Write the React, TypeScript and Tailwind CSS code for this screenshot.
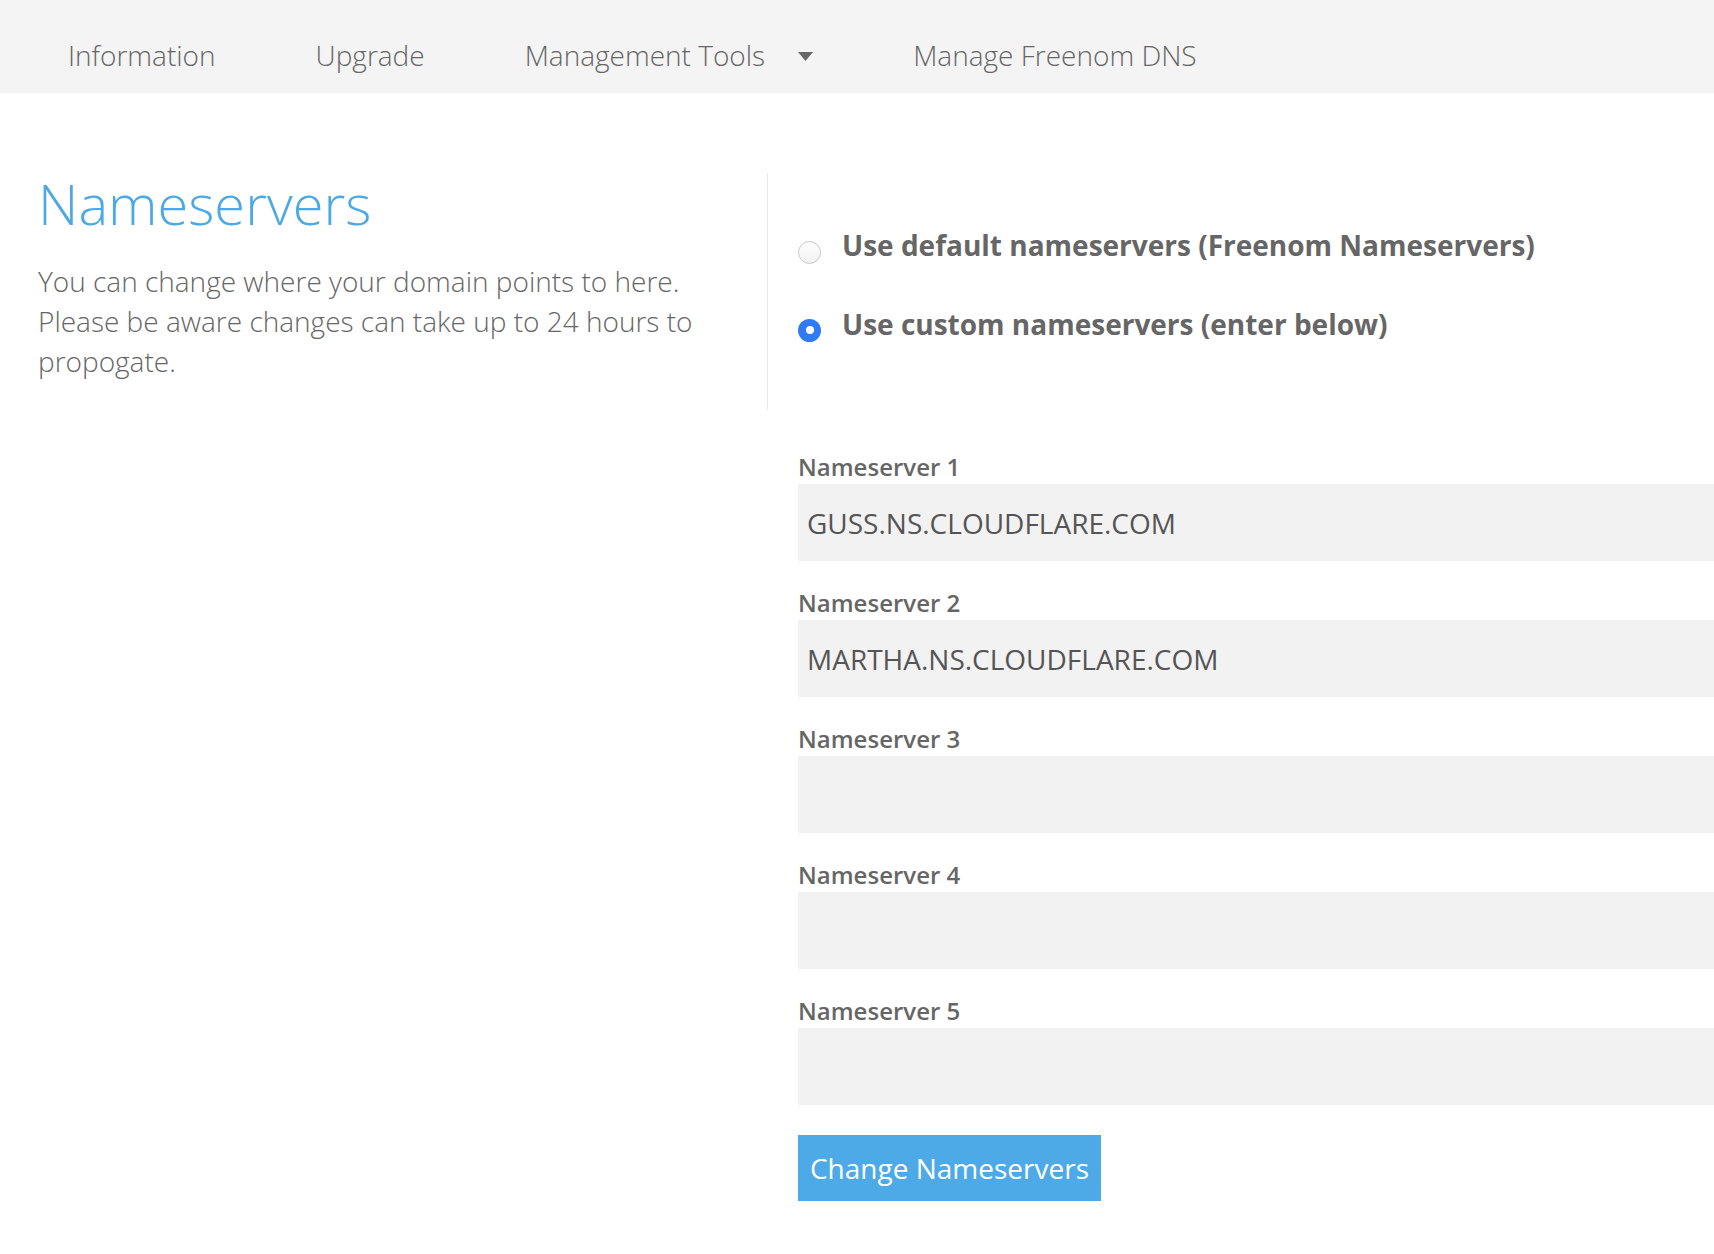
import { useState } from 'react'

const navItems = ['Information', 'Upgrade', 'Management Tools', 'Manage Freenom DNS']

function Radio({ checked, onClick }: { checked: boolean; onClick: () => void }) {
  if (checked) {
    return (
      <button onClick={onClick} className="w-[23px] h-[23px] rounded-full bg-[#2f7bf5] flex items-center justify-center shrink-0">
        <span className="w-[8px] h-[8px] rounded-full bg-white" />
      </button>
    )
  }
  return (
    <button
      onClick={onClick}
      className="w-[23px] h-[23px] rounded-full border border-[#c9c9c9] bg-gradient-to-b from-white to-[#f1f1f1] shrink-0"
    />
  )
}

export default function App() {
  const [mode, setMode] = useState<'default' | 'custom'>('custom')
  const [servers, setServers] = useState(['GUSS.NS.CLOUDFLARE.COM', 'MARTHA.NS.CLOUDFLARE.COM', '', '', ''])

  return (
    <div className="min-h-screen bg-white text-[#666] font-['Open_Sans',sans-serif]">
      <header className="h-[93px] bg-[#f4f4f4] pt-[16px] pl-[18px] flex items-center">
        {navItems.map((item, i) => (
          <a key={item} className="flex items-center px-[50px] text-[28px] font-light text-[#666] cursor-pointer">
            {item}
            {i === 2 && (
              <svg className="ml-[33px] mt-[4px]" width="15" height="9" viewBox="0 0 15 9">
                <path d="M0 0 L15 0 L7.5 9 Z" fill="#666" />
              </svg>
            )}
          </a>
        ))}
      </header>

      <main className="pt-[80px] pb-[52px] grid grid-cols-[768px_1fr]">
        <section className="border-r border-[#e8e8e8] pl-[38px] pr-[40px] h-[237px]">
          <h1 className="text-[56px] leading-[60px] font-light text-[#4ba9e6]">Nameservers</h1>
          <p className="mt-[28px] text-[28px] leading-[40px] font-light text-[#666]">
            You can change where your domain points to here. Please be aware changes can take up to 24 hours to propogate.
          </p>
        </section>

        <section className="pl-[30px] pt-[54px]">
          <label className="flex items-center gap-[21px] h-[36px]">
            <span className="mt-[15px] flex"><Radio checked={mode === 'default'} onClick={() => setMode('default')} /></span>
            <span className="text-[28px] font-bold text-[#666]">Use default nameservers (Freenom Nameservers)</span>
          </label>
          <label className="flex items-center gap-[21px] h-[36px] mt-[43px]">
            <span className="mt-[12px] flex"><Radio checked={mode === 'custom'} onClick={() => setMode('custom')} /></span>
            <span className="text-[28px] font-bold text-[#666]">Use custom nameservers (enter below)</span>
          </label>
        </section>

        <div />
        <section className="pl-[30px] pt-[42px]">
          {servers.map((value, i) => (
            <div key={i} className="mb-[27px]">
              <label className="block text-[24px] leading-[30px] font-semibold text-[#666]">Nameserver {i + 1}</label>
              <input
                type="text"
                value={value}
                onChange={e => setServers(servers.map((s, j) => (j === i ? e.target.value : s)))}
                className="mt-[2px] block w-full h-[77px] bg-[#f2f2f2] px-[9px] text-[28px] text-[#555] outline-none"
              />
            </div>
          ))}
          <button className="mt-[3px] w-[303px] h-[66px] bg-[#4eaae6] text-white text-[28px]">Change Nameservers</button>
        </section>
      </main>
    </div>
  )
}
